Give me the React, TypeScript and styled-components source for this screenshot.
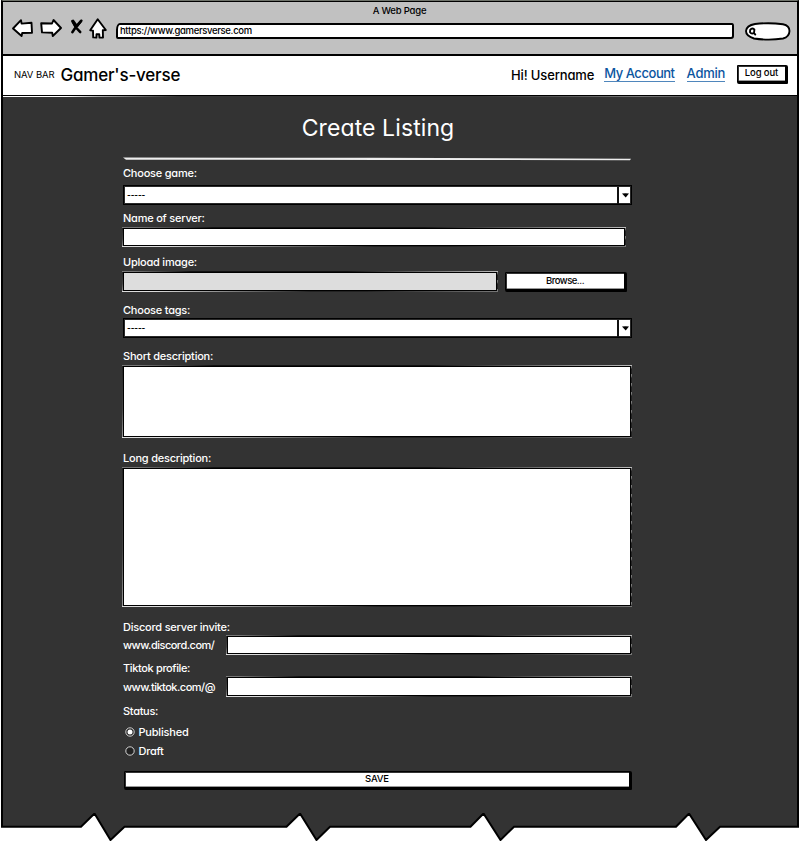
import React from "react";
import styled, { createGlobalStyle, css } from "styled-components";

const Global = createGlobalStyle`
  * { box-sizing: border-box; }
  body {
    margin: 0;
    background: #fff;
    color: #000;
    font-family: "Inter", "Liberation Sans", sans-serif;
    font-feature-settings: "cv11" 1;
  }
`;

const Page = styled.div`
  width: 800px;
  height: 841px;
  display: flex;
  flex-direction: column;
  overflow: hidden;
`;

const Text = styled.span<{ $size?: number; $track?: number; $weight?: number }>`
  font-size: ${(p) => p.$size ?? 11}px;
  letter-spacing: ${(p) => p.$track ?? 0}px;
  font-weight: ${(p) => p.$weight ?? 400};
  line-height: 16px;
  white-space: nowrap;
`;

/* Browser chrome */
const Chrome = styled.header`
  height: 56px;
  flex: none;
  margin: 0 1px 0 1px;
  border: 2px solid #000;
  border-top: 1px solid #6f736b;
  background: #c1c1c1;
`;

const TabTitle = styled.div`
  height: 18px;
  border-top: 1px solid #000;
  padding-right: 1px;
  display: flex;
  justify-content: center;
  align-items: center;
`;

const Toolbar = styled.div`
  display: flex;
  align-items: flex-start;
  padding-left: 9px;
`;

const ToolIcon = styled.svg<{ $gap?: number; $drop?: number }>`
  flex: none;
  display: block;
  margin-left: ${(p) => p.$gap ?? 0}px;
  margin-top: ${(p) => p.$drop ?? 0}px;
  fill: #fff;
  stroke: #000;
  stroke-width: 1.9;
  stroke-linejoin: round;
  stroke-linecap: round;
`;

const Address = styled.div`
  display: flex;
  align-items: center;
  width: 618px;
  height: 16px;
  margin: 4px 0 0 9px;
  padding-left: 2px;
  background: #fff;
  border: 2px solid #000;
  border-radius: 4px 2px 3px 2px / 7px 3px 3px 2px;
`;

/* Site navigation */
const NavBar = styled.nav`
  height: 40px;
  flex: none;
  display: flex;
  align-items: center;
  margin: 0 1px 0 1px;
  padding: 0 9px 2px 11px;
  background: #fff;
  border: 2px solid #000;
  border-top-width: 0;
  border-bottom-width: 1px;
`;

const Brand = styled(Text)`
  margin-left: 6px;
  line-height: 20px;
  flex: 1;
`;

const NavLink = styled.a<{ $track: number; $gap: number }>`
  margin-left: ${(p) => p.$gap}px;
  margin-bottom: 1px;
  font-size: 13px;
  line-height: 15px;
  letter-spacing: ${(p) => p.$track}px;
  color: #0b55a0;
  border-bottom: 1px solid #4f86bc;
  font-weight: 500;
  text-decoration: none;
`;

const Button = styled.button<{ $width: number; $height: number }>`
  width: ${(p) => p.$width}px;
  height: ${(p) => p.$height}px;
  flex: none;
  display: flex;
  align-items: center;
  justify-content: center;
  padding: 0;
  font: inherit;
  font-feature-settings: inherit;
  color: #000;
  background: #fff;
  border: solid #000;
  border-width: 1px 3px 3px 1px;
  border-radius: 1px 2px 1px 2px;
  box-shadow: inset 1px 1px 0 #333, inset 0 -1px 0 #999;
`;

const LogOut = styled(Button)`
  margin: 0 0 1px 12px;
`;

/* Dark page body */
const Content = styled.main`
  flex: none;
  height: 717px;
  margin: 0 1px 0 1px;
  padding-left: 120px;
  background: linear-gradient(90deg, #fff 0 8%, #aaa 12%, #333 22% 60%, #777 80%, #333) top / 100% 1px no-repeat, #333;
  border: solid #000;
  border-width: 0 2px;
`;

const Form = styled.form`
  width: 509px;
  display: flex;
  flex-direction: column;
  align-items: flex-start;
  margin-left: -1px;
`;

const Title = styled.h1`
  width: 510px;
  height: 32px;
  margin: 16px 0 0 1px;
  text-align: center;
  font-size: 23px;
  line-height: 32px;
  font-weight: 400;
  letter-spacing: 0.1px;
  color: #fff;
`;

const Rule = styled.svg`
  display: block;
  margin: 13px 0 0 1px;
  width: 508px;
  height: 4px;
  flex: none;
`;

const Label = styled.label<{ $top: number; $track?: number }>`
  height: 16px;
  margin-top: ${(p) => p.$top}px;
  padding-left: 1px;
  font-size: 11px;
  line-height: 16px;
  font-weight: 450;
  letter-spacing: ${(p) => p.$track ?? -0.22}px;
  color: #fff;
  white-space: nowrap;
`;

const Row = styled.div<{ $top?: number; $gap?: number }>`
  display: flex;
  align-items: center;
  gap: ${(p) => p.$gap ?? 0}px;
  margin-top: ${(p) => p.$top ?? 0}px;
`;

/* Pale slivers that show around a field's black outline */
const slivers = css`
  background:
    linear-gradient(90deg, #777 0 3%, #111 18% 60%, #555 75%, #bbb) top / 100% 1px no-repeat,
    linear-gradient(90deg, #ddd 0 8%, #666 35%, #222 50% 65%, #777) bottom / 100% 1px no-repeat,
    linear-gradient(#222, #444 60%, #999) left / 1px 100% no-repeat,
    repeating-linear-gradient(#777 0 2px, #222 4px 9px) right / 1px 100% no-repeat,
    #000;
`;

const Field = styled.div<{ $width: number; $height: number; $top?: number; $fill?: string }>`
  width: ${(p) => p.$width}px;
  height: ${(p) => p.$height}px;
  margin-top: ${(p) => p.$top ?? 0}px;
  flex: none;
  display: flex;
  padding: 2px;
  ${slivers}
  &::after {
    content: "";
    flex: 1;
    background: ${(p) => p.$fill ?? "#fff"};
  }
`;

const Select = styled.div<{ $top: number }>`
  width: 509px;
  height: 20px;
  margin: ${(p) => p.$top}px 0 0 1px;
  padding: 1px 0 0 1px;
  flex: none;
  display: flex;
  align-items: stretch;
  background: #fff;
  border: 1px solid #000;
  box-shadow: inset 0 0 0 1px #2a2a2a;
`;

const SelectValue = styled(Text)`
  flex: 1;
  padding-left: 2px;
`;

const Caret = styled.div`
  width: 14px;
  border-left: 2px solid #111;
  display: flex;
  align-items: center;
  justify-content: center;
`;

const Prefix = styled(Text)`
  width: 104px;
  padding: 1px 0 0 1px;
  color: #fff;
`;

const Option = styled.div<{ $top: number }>`
  display: flex;
  align-items: center;
  gap: 4px;
  margin-top: ${(p) => p.$top}px;
  padding-left: 2.5px;
  height: 16px;
  color: #fff;
`;

const SaveRow = styled.div`
  margin: 12px 0 0 2px;
`;

const Torn = styled.svg`
  display: block;
  flex: none;
`;

const Dropdown = ({ top }: { top: number }) => (
  <Select $top={top}>
    <SelectValue $size={8} $track={-0.1} $weight={700}>-----</SelectValue>
    <Caret>
      <svg width="7" height="5" viewBox="0 0 7 5">
        <path d="M0 .6Q3.5 0 7 .6L3.7 4.5z" />
      </svg>
    </Caret>
  </Select>
);

const Radio = ({ checked }: { checked?: boolean }) => (
  <svg width="10" height="10" viewBox="0 0 10 10">
    <circle cx="5" cy="5" r="4.2" fill="#222" stroke="#e4e4e4" strokeWidth=".9" />
    {checked && <circle cx="5" cy="5" r="2.5" fill="#fff" />}
  </svg>
);

const tears: [number, number, number, number][] = [
  [81, 94.5, 110.5, 124.5],
  [286.5, 300, 316.5, 330],
  [470.5, 483.5, 500.5, 514],
  [676, 689, 706, 720],
];
const edge = tears
  .map(([a, b, c, d]) => `L${a} 13.8L${b} .5L${c} 27L${d} 13.8`)
  .join("");

export default function App() {
  return (
    <Page>
      <Global />
      <Chrome>
        <TabTitle>
          <Text $size={9.5} $track={-0.2} $weight={500}>A Web Page</Text>
        </TabTitle>
        <Toolbar>
          <ToolIcon width="21" height="18" viewBox="0 0 21 18">
            <path d="M1 9.5L9 1.2L9.6 4.6L19.5 3.8L20 13.7L10.2 14L9.6 17z" />
          </ToolIcon>
          <ToolIcon $gap={7} width="22" height="18" viewBox="0 0 22 18">
            <path d="M1.2 4.3L12 4.5L13.5 1L21 9L12.8 17L12.2 13.8L2 13.4z" />
          </ToolIcon>
          <ToolIcon $gap={8} width="13" height="15" viewBox="0 0 13 15">
            <path d="M2.6 2.4Q5.5 9 10.2 13M11 2Q6 7 2.4 13.2" strokeWidth="2.6" fill="none" />
            <path d="M2.2 1.8L5.2 7.2M3.2 1.6L6.6 6.4M11.6 1.6L7.4 7.2" fill="none" />
          </ToolIcon>
          <ToolIcon $gap={6} $drop={-1} width="18" height="21" viewBox="0 0 18 21">
            <path d="M8.7 1.2L16.8 12L13.8 12.3L14 19.5L10.5 19.6L10.2 16.2L7.5 16.3L7.4 19.6L4.2 19.4L4 12.6L1.2 12.2z" />
          </ToolIcon>
          <Address>
            <Text $size={9.5} $track={-0.34} $weight={500}>https://www.gamersverse.com</Text>
          </Address>
          <ToolIcon $gap={11} $drop={3} width="46" height="19" viewBox="0 0 46 19">
            <path d="M10 2Q24 .3 38 2.2Q44.5 3.5 44.5 9Q44.3 15 38 16.5Q24 18.7 9 16.5Q1 14 1 9Q1.5 3.5 10 2z" />
            <path d="M5.2 7.8Q7 5.6 9.4 7.5L9 11Q6.5 12.4 5 10.2zM9 11L10.3 12.6" />
          </ToolIcon>
        </Toolbar>
      </Chrome>

      <NavBar>
        <Text $size={9.5} $track={-0.1}>NAV BAR</Text>
        <Brand $size={17} $track={-0.2} $weight={500}>Gamer's-verse</Brand>
        <Text $size={13} $track={-0.15} $weight={500}>Hi! Username</Text>
        <NavLink $track={-0.45} $gap={10}>My Account</NavLink>
        <NavLink $track={-0.28} $gap={12}>Admin</NavLink>
        <LogOut type="button" $width={51} $height={19}>
          <Text $size={9.5} $track={-0.1} $weight={500}>Log out</Text>
        </LogOut>
      </NavBar>

      <Content>
        <Form>
          <Title>Create Listing</Title>
          <Rule viewBox="0 0 508 4">
            <path d="M0 .6L250 .8L508 1.8L507 3.2L260 3L3 2.7z" fill="#eee" />
          </Rule>

          <Label $top={4}>Choose game:</Label>
          <Dropdown top={4} />

          <Label $top={5}>Name of server:</Label>
          <Field $top={1} $width={504} $height={20} />

          <Label $top={7}>Upload image:</Label>
          <Row $top={1} $gap={7}>
            <Field $width={376} $height={21} $fill="#ddd" />
            <Button type="button" $width={122} $height={20}>
              <Text $size={9.5} $track={-0.5} $weight={500}>Browse...</Text>
            </Button>
          </Row>

          <Label $top={10}>Choose tags:</Label>
          <Dropdown top={0.4} />

          <Label $top={9.6}>Short description:</Label>
          <Field $top={1} $width={510} $height={73} />

          <Label $top={12}>Long description:</Label>
          <Field $top={1} $width={510} $height={140} />

          <Label $top={12}>Discord server invite:</Label>
          <Row>
            <Prefix $track={-0.5} $weight={450}>www.discord.com/</Prefix>
            <Field $width={406} $height={20} />
          </Row>

          <Label $top={5} $track={-0.36}>Tiktok profile:</Label>
          <Row>
            <Prefix $track={-0.5} $weight={450}>www.tiktok.com/@</Prefix>
            <Field $width={406} $height={21} />
          </Row>

          <Label as="div" $top={6} $track={-0.3}>Status:</Label>
          <Option $top={5}>
            <Radio checked />
            <Text $track={-0.2} $weight={450}>Published</Text>
          </Option>
          <Option $top={3}>
            <Radio />
            <Text $track={-0.25} $weight={450}>Draft</Text>
          </Option>

          <SaveRow>
            <Button type="submit" $width={508} $height={19}>
              <Text $size={9.5} $track={-0.2} $weight={500}>SAVE</Text>
            </Button>
          </SaveRow>
        </Form>
      </Content>

      <Torn width="800" height="28" viewBox="0 0 800 28">
        <path d={`M2 -4L2 13.8${edge}L798 13.8L798 -4z`} fill="#333" stroke="#000" strokeWidth="2" />
      </Torn>
    </Page>
  );
}
